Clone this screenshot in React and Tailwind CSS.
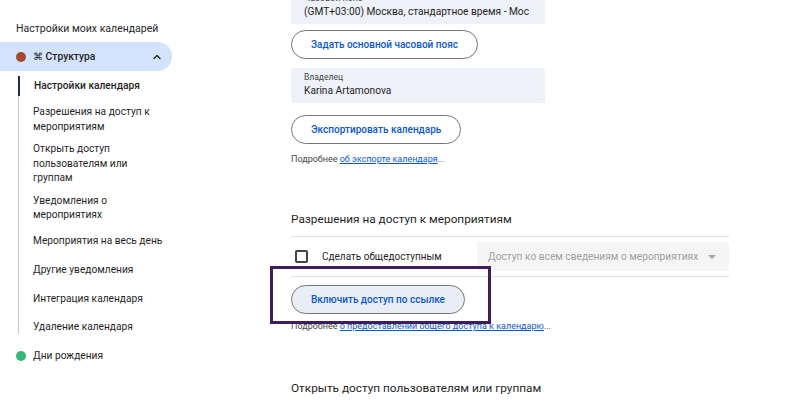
import { ChevronUp } from 'lucide-react'

const TREE = [
  { label: 'Настройки календаря', active: true },
  { label: 'Разрешения на доступ к мероприятиям' },
  { label: 'Открыть доступ пользователям или группам' },
  { label: 'Уведомления о мероприятиях' },
  { label: 'Мероприятия на весь день' },
  { label: 'Другие уведомления' },
  { label: 'Интеграция календаря' },
  { label: 'Удаление календаря' },
]

function PillButton({ children, filled }) {
  return (
    <button
      className={`h-[29px] px-[19px] rounded-full border border-[#747775] text-[10px] font-medium text-[#0b57d0] ${
        filled ? 'bg-[#e9eef6]' : 'bg-white'
      }`}
    >
      {children}
    </button>
  )
}

function Sidebar() {
  return (
    <aside className="w-[172px] shrink-0 pt-[21px]">
      <div className="pl-4 text-[10.5px] leading-[15px] text-[#1f1f1f]">Настройки моих календарей</div>

      {/* Calendar pill */}
      <div className="mt-[6px] h-[29px] flex items-center bg-[#d3e3fd] rounded-r-full pl-4 pr-[9px]">
        <span className="w-[10px] h-[10px] rounded-full bg-[#a14a2c]" />
        <span className="ml-[7px] text-[10.3px] font-medium text-[#1f1f1f]">⌘ Структура</span>
        <ChevronUp className="ml-auto w-[12px] h-[12px] text-[#1f1f1f]" strokeWidth={2.5} />
      </div>

      {/* Sub items */}
      <div className="ml-[18px] mt-[5px] border-l border-[#c4c7c5] w-[150px]">
        {TREE.map((item, i) => (
          <div
            key={item.label}
            className={`pl-[14px] text-[10.2px] leading-[14.5px] text-[#1f1f1f] flex ${
              i === 0
                ? 'h-[20px] items-center -ml-px border-l-2 border-[#1f2a5c] font-medium mb-[5px]'
                : i === TREE.length - 1
                  ? 'h-[20px] items-start pt-[6px]'
                  : 'min-h-[29px] items-center py-[4px]'
            }`}
          >
            <span className="w-[134px]">{item.label}</span>
          </div>
        ))}
      </div>

      <div className="mt-[8px] pl-4 flex items-center h-[29px]">
        <span className="w-[10px] h-[10px] rounded-full bg-[#33b679]" />
        <span className="ml-[7px] text-[10.2px] text-[#1f1f1f]">Дни рождения</span>
      </div>
    </aside>
  )
}

export default function App() {
  return (
    <div className="relative w-[800px] h-[402px] overflow-hidden bg-white flex" style={{ fontFamily: 'Roboto, "Noto Sans", sans-serif' }}>
      <Sidebar />

      <main className="ml-[119px] w-[438px] -mt-[11px]">
        {/* Time zone */}
        <div className="w-[254px] h-[35px] bg-[#eef1f8] rounded-[3px] pl-[13px] pt-[3px] overflow-hidden whitespace-nowrap">
          <div className="text-[9px] leading-[12px] text-[#444746]">Часовой пояс</div>
          <div className="text-[10.2px] leading-[16px] text-[#1f1f1f]">(GMT+03:00) Москва, стандартное время - Мос</div>
        </div>

        <div className="mt-[6px]">
          <PillButton>Задать основной часовой пояс</PillButton>
        </div>

        {/* Owner */}
        <div className="mt-[9px] w-[254px] h-[35px] bg-[#eef1f8] rounded-[3px] pl-[13px] pt-[3px]">
          <div className="text-[8.5px] leading-[12px] text-[#444746]">Владелец</div>
          <div className="text-[10.2px] leading-[16px] text-[#1f1f1f]">Karina Artamonova</div>
        </div>

        <div className="mt-[12px]">
          <PillButton>Экспортировать календарь</PillButton>
        </div>

        <div className="mt-[9px] text-[9px] leading-[12px] text-[#444746]">
          Подробнее <span className="text-[#0b57d0] underline">об экспорте календаря</span>...
        </div>

        {/* Permissions */}
        <h2 className="mt-[45px] text-[11.8px] leading-[18px] text-[#1f1f1f]">Разрешения на доступ к мероприятиям</h2>

        <div className="mt-[8px] border-y border-[#e0e0e0] h-[41px] flex items-center">
          <span className="ml-[4px] w-[13px] h-[13px] border-2 border-[#444] rounded-[2px]" />
          <span className="ml-[14px] text-[10px] text-[#1f1f1f]">Сделать общедоступным</span>
          <div className="ml-auto w-[252px] h-[29px] bg-[#f5f5f5] rounded-[3px] flex items-center pl-[11px] pr-[13px]">
            <span className="text-[10.2px] text-[#a0a0a0]">Доступ ко всем сведениям о мероприятиях</span>
            <span className="ml-auto w-0 h-0 border-x-[4px] border-x-transparent border-t-[4px] border-t-[#a0a0a0]" />
          </div>
        </div>

        <div className="mt-[8px]">
          <PillButton filled>Включить доступ по ссылке</PillButton>
        </div>

        <div className="mt-[6px] text-[9px] leading-[12px] text-[#444746]">
          Подробнее <span className="text-[#0b57d0] underline">о предоставлении общего доступа к календарю</span>...
        </div>

        <h2 className="mt-[47px] text-[11.8px] leading-[18px] text-[#1f1f1f]">Открыть доступ пользователям или группам</h2>
      </main>

      {/* Annotation frame */}
      <div className="absolute left-[270px] top-[266px] w-[221px] h-[58px] border-[3px] border-[#3d1d5c]" />
    </div>
  )
}
